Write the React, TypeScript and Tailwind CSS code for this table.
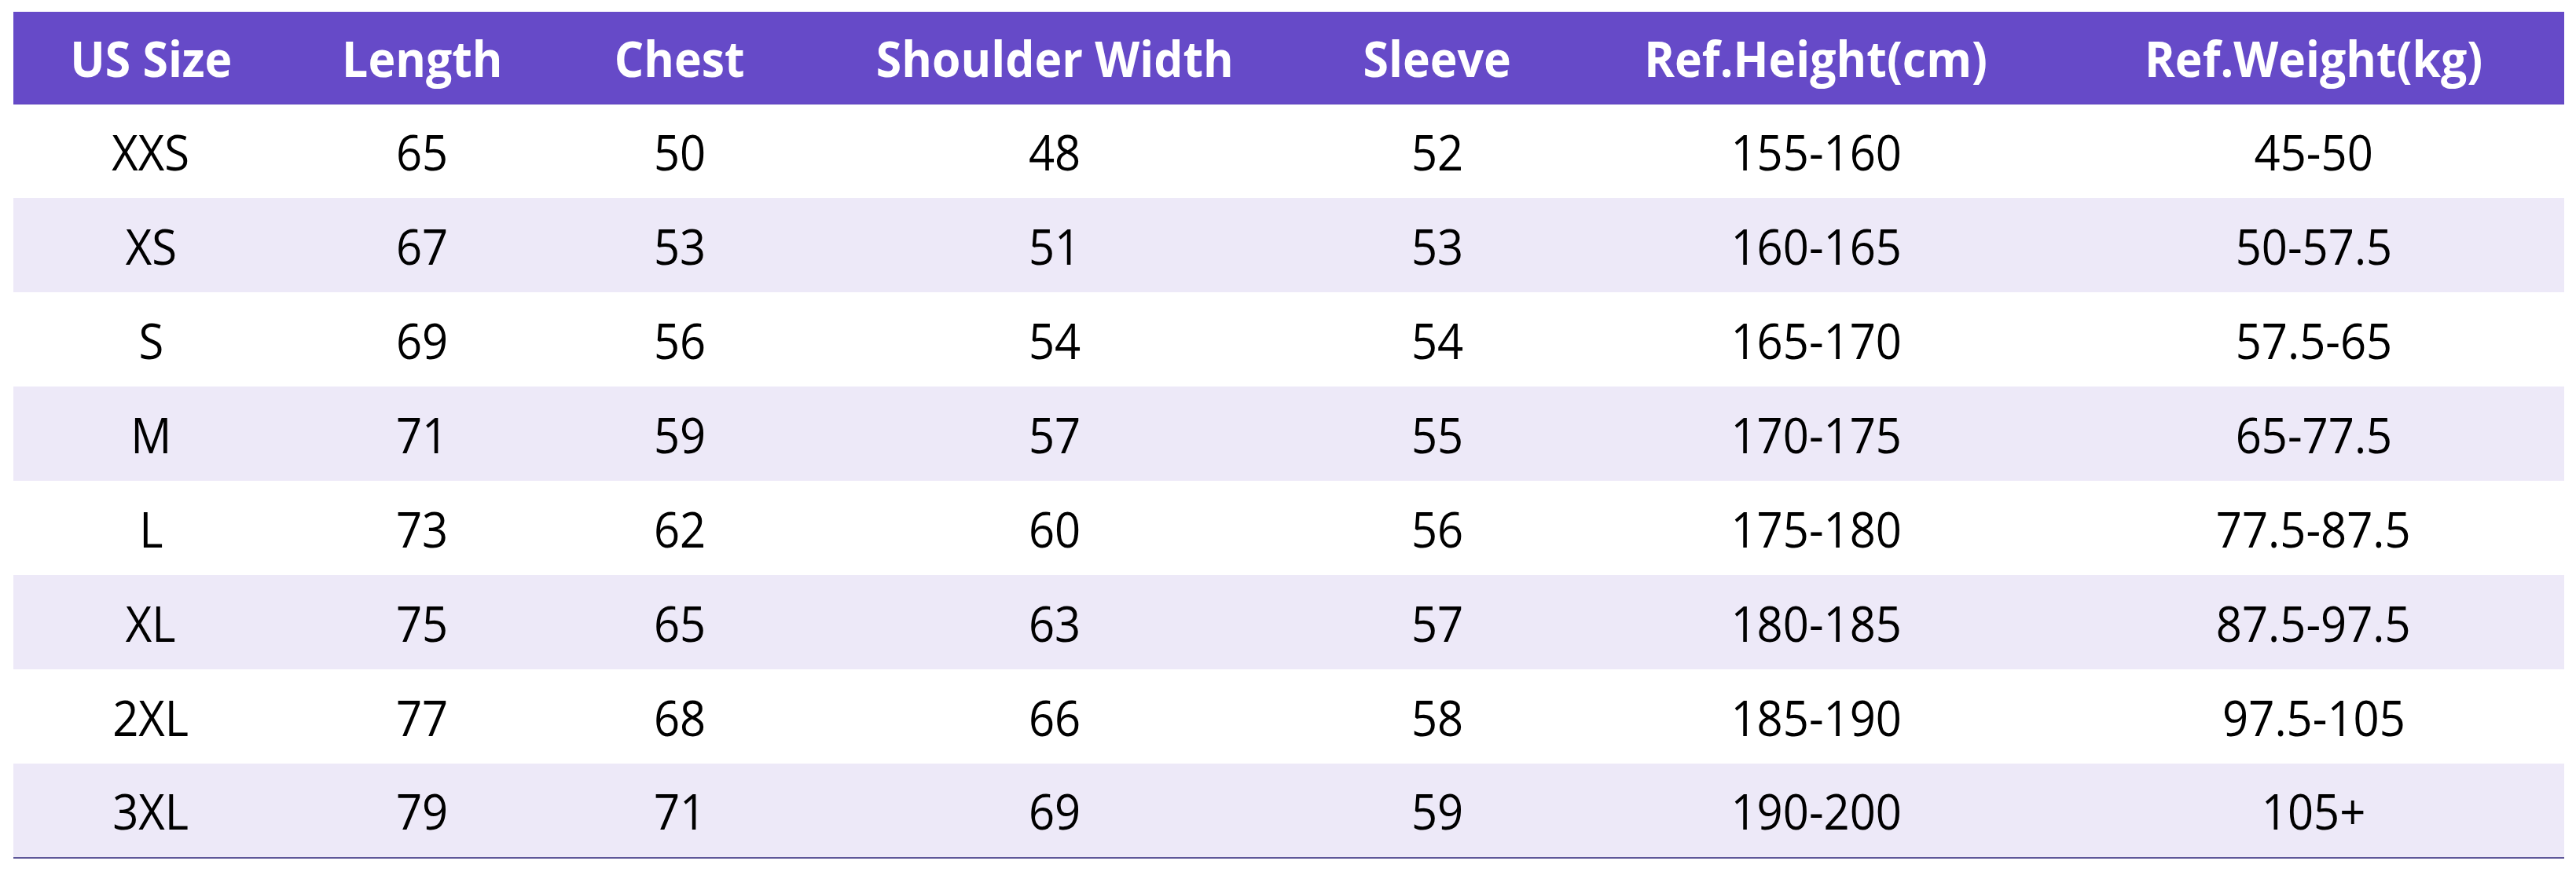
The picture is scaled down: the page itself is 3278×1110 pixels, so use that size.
import React from "react";

const headers = [
  "US Size",
  "Length",
  "Chest",
  "Shoulder Width",
  "Sleeve",
  "Ref.Height(cm)",
  "Ref.Weight(kg)",
];

const rows: string[][] = [
  ["XXS", "65", "50", "48", "52", "155-160", "45-50"],
  ["XS", "67", "53", "51", "53", "160-165", "50-57.5"],
  ["S", "69", "56", "54", "54", "165-170", "57.5-65"],
  ["M", "71", "59", "57", "55", "170-175", "65-77.5"],
  ["L", "73", "62", "60", "56", "175-180", "77.5-87.5"],
  ["XL", "75", "65", "63", "57", "180-185", "87.5-97.5"],
  ["2XL", "77", "68", "66", "58", "185-190", "97.5-105"],
  ["3XL", "79", "71", "69", "59", "190-200", "105+"],
];

const widths = [350, 340, 316, 638, 336, 628, 638];

export default function App() {
  return (
    <div className="w-[3278px] h-[1110px] bg-white pt-[15px] pl-[17px] font-['Open_Sans','Noto_Sans',sans-serif]">
      <table className="w-[3246px] table-fixed border-collapse">
        <colgroup>
          {widths.map((w, i) => (
            <col key={i} style={{ width: w }} />
          ))}
        </colgroup>
        <thead>
          <tr className="h-[117px] bg-[#664ac8] border-b border-[#5c42ba]">
            {headers.map((h) => (
              <th
                key={h}
                className="p-0 text-center align-middle text-[63px] leading-none font-bold text-white whitespace-nowrap"
              >
                <span className="inline-block scale-x-[0.935]">{h}</span>
              </th>
            ))}
          </tr>
        </thead>
        <tbody className="border-b-2 border-[#5e5799]">
          {rows.map((r, ri) => (
            <tr
              key={ri}
              className={
                ri % 2 === 0 ? "h-[120px] bg-white" : "h-[120px] bg-[#ede9f8]"
              }
            >
              {r.map((c, ci) => (
                <td
                  key={ci}
                  className="p-0 text-center align-middle text-[63px] leading-none font-normal text-black whitespace-nowrap"
                >
                  <span className="inline-block scale-x-[0.92]">{c}</span>
                </td>
              ))}
            </tr>
          ))}
        </tbody>
      </table>
    </div>
  );
}
